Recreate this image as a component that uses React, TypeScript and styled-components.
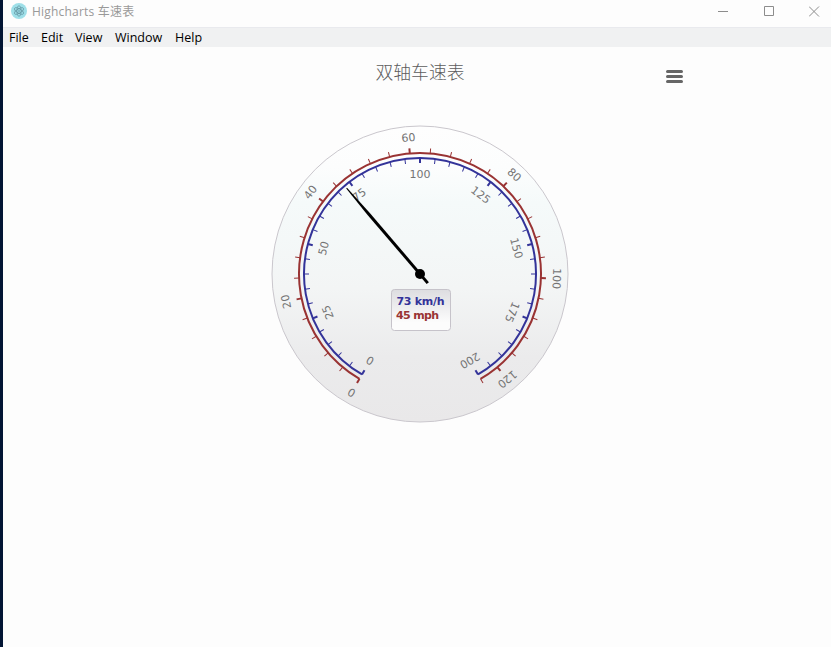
import React from "react";
import styled, { createGlobalStyle } from "styled-components";

const GlobalStyle = createGlobalStyle`
  * { box-sizing: border-box; }
  body { margin: 0; background: #fdfdfd; overflow: hidden; }
`;

const uiFont = '"Open Sans", "Noto Sans CJK SC", sans-serif';

const Frame = styled.div`
  display: flex;
  flex-direction: column;
  height: 647px;
  border-left: 3px solid #021534;
  background: #fdfdfd;
  font-family: ${uiFont};
`;

const TitleBar = styled.header`
  display: flex;
  align-items: center;
  height: 27px;
  padding: 0 11px 5px 8px;
  flex: none;
`;

const AppIcon = styled.svg`
  width: 16px;
  height: 16px;
  margin-right: 5px;
`;

const WindowTitle = styled.span`
  flex: 1;
  padding-top: 2px;
  font-size: 12px;
  line-height: 16px;
  letter-spacing: 0.2px;
  color: #999;
`;

const WindowControls = styled.div`
  display: flex;
  gap: 34.5px;
`;

const ControlIcon = styled.svg`
  display: block;
  width: 11px;
  height: 11px;
  fill: none;
  stroke: #8c8c8c;
`;

const MenuBar = styled.nav`
  display: flex;
  align-items: center;
  gap: 13px;
  height: 20px;
  padding: 1px 6px 0;
  border-top: 1px solid #e9eaee;
  background: #f0f1f2;
  flex: none;
`;

const MenuItem = styled.span<{ $width: number }>`
  width: ${(p) => p.$width}px;
  font-size: 12.5px;
  line-height: 18px;
  color: #000;
  white-space: nowrap;
`;

const ChartArea = styled.main`
  display: flex;
  justify-content: center;
  padding-left: 12px;
`;

const Chart = styled.svg`
  display: block;
  width: 600px;
  height: 400px;
`;

const ChartTitle = styled.text`
  font-family: "Noto Sans CJK SC", sans-serif;
  font-weight: 300;
  font-size: 17.8px;
  fill: #5c5c5c;
  text-anchor: middle;
`;

const AxisLabel = styled.text`
  font-family: "DejaVu Sans", sans-serif;
  font-size: 11px;
  fill: #747474;
  text-anchor: middle;
`;

const Reading = styled.text<{ $color: string }>`
  font-family: "DejaVu Sans", sans-serif;
  font-size: 11px;
  font-weight: bold;
  fill: ${(p) => p.$color};
`;

const menus = [
  { label: "File", width: 19 },
  { label: "Edit", width: 21 },
  { label: "View", width: 27 },
  { label: "Window", width: 47 },
  { label: "Help", width: 27 },
];

type AxisProps = {
  max: number;
  major: number;
  minor: number;
  radius: number;
  tick: number;
  labelRadius: number;
  color: string;
};

function steps(max: number, step: number) {
  return Array.from({ length: Math.floor(max / step) + 1 }, (_, i) => i * step);
}

function Axis({ max, major, minor, radius, tick, labelRadius, color }: AxisProps) {
  const angle = (v: number) => -150 + (300 * v) / max;
  const x = radius * 0.5;
  const y = radius * Math.cos(Math.PI / 6);
  return (
    <g>
      <path d={`M${-x} ${y}A${radius} ${radius} 0 1 1 ${x} ${y}`} fill="none" stroke={color} strokeWidth={2} />
      {steps(max, minor).map((v) => (
        <path
          key={v}
          d={`M0 ${-radius}V${-radius - tick}`}
          transform={`rotate(${angle(v)})`}
          stroke={color}
          strokeWidth={v % major === 0 ? 2 : 1}
        />
      ))}
      {steps(max, major).map((v) => (
        <AxisLabel key={v} y={-labelRadius + 4} transform={`rotate(${angle(v)})`}>
          {v}
        </AxisLabel>
      ))}
    </g>
  );
}

function Gauge() {
  return (
    <Chart viewBox="0 0 600 400">
      <defs>
        <linearGradient id="dial" x1="0" y1="0" x2="0" y2="1">
          <stop offset="0" stopColor="#fefefe" />
          <stop offset="0.14" stopColor="#fcfdfd" />
          <stop offset="0.26" stopColor="#f5fafa" />
          <stop offset="0.55" stopColor="#f3f5f5" />
          <stop offset="0.78" stopColor="#ebebec" />
          <stop offset="1" stopColor="#e9e8e9" />
        </linearGradient>
        <linearGradient id="readout" x1="0" y1="0" x2="0" y2="1">
          <stop offset="0" stopColor="#dddde0" />
          <stop offset="0.8" stopColor="#fcfcfc" />
        </linearGradient>
      </defs>
      <ChartTitle x="297" y="32">双轴车速表</ChartTitle>
      <path d="M544.5 24.5h14M544.5 29.5h14M544.5 34.5h14" stroke="#666" strokeWidth="3" strokeLinecap="round" />
      <g transform="translate(297 227)">
        <circle r="148" fill="url(#dial)" stroke="#cac7cd" />
        <Axis max={200} major={25} minor={5} radius={116} tick={-5} labelRadius={100} color="#339" />
        <Axis max={124} major={20} minor={4} radius={121} tick={5} labelRadius={137} color="#933" />
        <rect x="-28.5" y="15.5" width="59" height="41" rx="3" fill="url(#readout)" stroke="#c6c3ca" />
        <Reading $color="#339" x="-23.5" y="31" textLength="48">73 km/h</Reading>
        <Reading $color="#933" x="-24" y="45" textLength="43">45 mph</Reading>
        <path d="M-1.5 12L-1.5 -79L-0.5 -113L0.5 -113L1.5 -79L1.5 12Z" transform="rotate(-40.5)" />
        <circle r="5" />
      </g>
    </Chart>
  );
}

export default function App() {
  return (
    <Frame>
      <GlobalStyle />
      <TitleBar>
        <AppIcon viewBox="0 0 16 16">
          <circle cx="8" cy="8" r="8" fill="#9edfe8" />
          <g fill="none" stroke="#5f929f" strokeWidth="0.7">
            <ellipse cx="8" cy="8" rx="5.2" ry="2.1" transform="rotate(30 8 8)" />
            <ellipse cx="8" cy="8" rx="5.2" ry="2.1" transform="rotate(90 8 8)" />
            <ellipse cx="8" cy="8" rx="5.2" ry="2.1" transform="rotate(150 8 8)" />
          </g>
          <circle cx="8" cy="8" r="0.8" fill="#5f929f" />
        </AppIcon>
        <WindowTitle>Highcharts 车速表</WindowTitle>
        <WindowControls>
          <ControlIcon viewBox="0 0 11 11"><path d="M0 5.5h10" /></ControlIcon>
          <ControlIcon viewBox="0 0 11 11"><path d="M.5 .5h9v9h-9z" /></ControlIcon>
          <ControlIcon viewBox="0 0 11 11"><path d="M0 .5l10 10M10 .5l-10 10" /></ControlIcon>
        </WindowControls>
      </TitleBar>
      <MenuBar>
        {menus.map((m) => (
          <MenuItem key={m.label} $width={m.width}>{m.label}</MenuItem>
        ))}
      </MenuBar>
      <ChartArea>
        <Gauge />
      </ChartArea>
    </Frame>
  );
}
